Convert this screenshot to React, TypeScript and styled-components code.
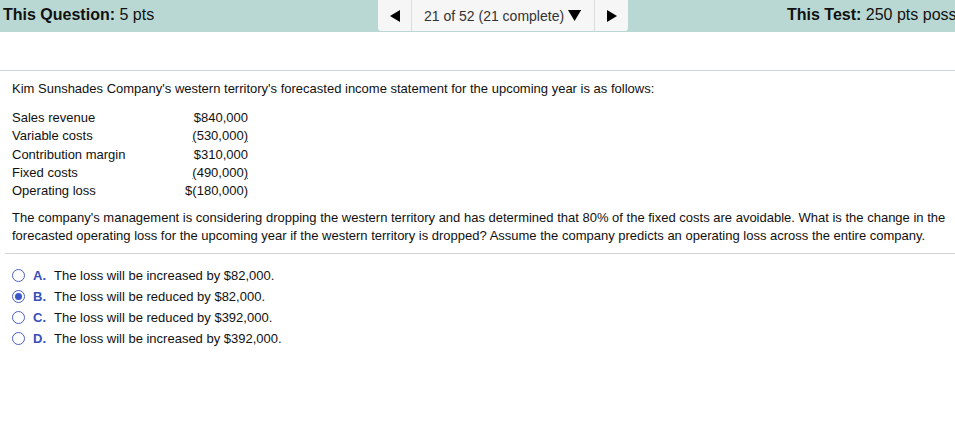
import React from "react";
import styled, { createGlobalStyle } from "styled-components";

const GlobalStyle = createGlobalStyle`
  html, body {
    margin: 0;
    padding: 0;
    background: #ffffff;
    overflow: hidden;
  }
  body {
    font-family: "Liberation Sans", Arial, Helvetica, sans-serif;
    color: #111;
  }
`;

const rows = [
  { label: "Sales revenue", value: "$840,000", paren: false },
  { label: "Variable costs", value: "530,000", paren: true },
  { label: "Contribution margin", value: "$310,000", paren: false },
  { label: "Fixed costs", value: "490,000", paren: true },
  { label: "Operating loss", value: "$(180,000)", paren: false },
];

const options = [
  { letter: "A.", text: "The loss will be increased by $82,000." },
  { letter: "B.", text: "The loss will be reduced by $82,000." },
  { letter: "C.", text: "The loss will be reduced by $392,000." },
  { letter: "D.", text: "The loss will be increased by $392,000." },
];

const Page = styled.div`
  width: 955px;
  height: 437px;
  overflow: hidden;
`;

const Header = styled.header`
  display: flex;
  align-items: flex-start;
  height: 32px;
  background: #b9d8d4;
  white-space: nowrap;
  overflow: hidden;
`;

const HeaderLabel = styled.div<{ $offset?: number }>`
  flex: 0 0 auto;
  font-size: 16px;
  line-height: 29px;
  color: #111;
  margin-left: ${(p) => p.$offset ?? 0}px;
  b {
    font-weight: bold;
  }
`;

const Left = styled(HeaderLabel)`
  width: 375px;
  padding-left: 3px;
`;

const Nav = styled.div`
  flex: 0 0 250px;
  display: flex;
  height: 31px;
  background: #f6f6f6;
  border-radius: 0 0 3px 3px;
`;

const NavArrow = styled.div`
  flex: 0 0 33px;
  display: flex;
  align-items: center;
  justify-content: center;
  color: #000;
`;

const NavMiddle = styled.div`
  flex: 1;
  display: flex;
  align-items: center;
  gap: 4px;
  padding-left: 12px;
  border-left: 1px solid #dcdcdc;
  border-right: 1px solid #dcdcdc;
  font-size: 14px;
  color: #333;
`;

const Content = styled.main`
  margin-top: 38px;
  border-top: 1px solid #d0d3de;
  padding: 9px 0 0 12px;
  font-size: 13px;
  line-height: 18px;
  color: #111;
`;

const Intro = styled.p`
  margin: 0 0 11px;
`;

const Statement = styled.div`
  display: grid;
  grid-template-columns: 130px 106px;
  line-height: 18.25px;
  margin-bottom: 9px;
`;

const Amount = styled.span`
  text-align: right;
`;

const Paren = styled.span`
  text-decoration: underline;
  text-decoration-color: #666;
`;

const Question = styled.p`
  margin: 0;
  padding-right: 8px;
`;

const Divider = styled.hr`
  margin: 8px 0 0 -7px;
  border: none;
  border-top: 1px solid #d0d3de;
`;

const Options = styled.ul`
  list-style: none;
  margin: 11px 0 0;
  padding: 0;
`;

const Option = styled.li`
  display: flex;
  align-items: center;
  height: 21px;
`;

const Radio = styled.span<{ $checked: boolean }>`
  box-sizing: border-box;
  width: 13px;
  height: 13px;
  border-radius: 50%;
  border: 1.5px solid #4a62c4;
  display: flex;
  align-items: center;
  justify-content: center;
  margin-right: 8px;
  &::after {
    content: "";
    width: 7px;
    height: 7px;
    border-radius: 50%;
    background: ${(p) => (p.$checked ? "#3a57c9" : "transparent")};
  }
`;

const Letter = styled.span`
  width: 21px;
  font-weight: bold;
  color: #3550b8;
`;

function Triangle({ dir, size = 10 }: { dir: "left" | "right" | "down"; size?: number }) {
  const pts =
    dir === "left"
      ? "10,0 10,12 0,6"
      : dir === "right"
      ? "0,0 10,6 0,12"
      : "0,0 12,0 6,10";
  const w = dir === "down" ? 12 : 10;
  const h = dir === "down" ? 10 : 12;
  return (
    <svg width={(size * w) / 10} height={(size * h) / 10} viewBox={`0 0 ${w} ${h}`}>
      <polygon points={pts} fill="#000" />
    </svg>
  );
}

export default function App() {
  return (
    <Page>
      <GlobalStyle />
      <Header>
        <Left>
          <b>This Question:</b> 5 pts
        </Left>
        <Nav>
          <NavArrow>
            <Triangle dir="left" />
          </NavArrow>
          <NavMiddle>
            21 of 52 (21 complete)
            <Triangle dir="down" size={11} />
          </NavMiddle>
          <NavArrow>
            <Triangle dir="right" />
          </NavArrow>
        </Nav>
        <HeaderLabel $offset={159}>
          <b>This Test:</b> 250 pts possible
        </HeaderLabel>
      </Header>
      <Content>
        <Intro>
          Kim Sunshades Company's western territory's forecasted income statement for the upcoming
          year is as follows:
        </Intro>
        <Statement>
          {rows.map((r) => (
            <React.Fragment key={r.label}>
              <span>{r.label}</span>
              <Amount>
                {r.paren ? (
                  <>
                    <Paren>(</Paren>
                    {r.value}
                    <Paren>)</Paren>
                  </>
                ) : (
                  r.value
                )}
              </Amount>
            </React.Fragment>
          ))}
        </Statement>
        <Question>
          The company's management is considering dropping the western territory and has determined
          that 80% of the fixed costs are avoidable. What is the change in the forecasted operating
          loss for the upcoming year if the western territory is dropped? Assume the company predicts
          an operating loss across the entire company.
        </Question>
        <Divider />
        <Options>
          {options.map((o, i) => (
            <Option key={o.letter}>
              <Radio $checked={i === 1} />
              <Letter>{o.letter}</Letter>
              <span>{o.text}</span>
            </Option>
          ))}
        </Options>
      </Content>
    </Page>
  );
}
